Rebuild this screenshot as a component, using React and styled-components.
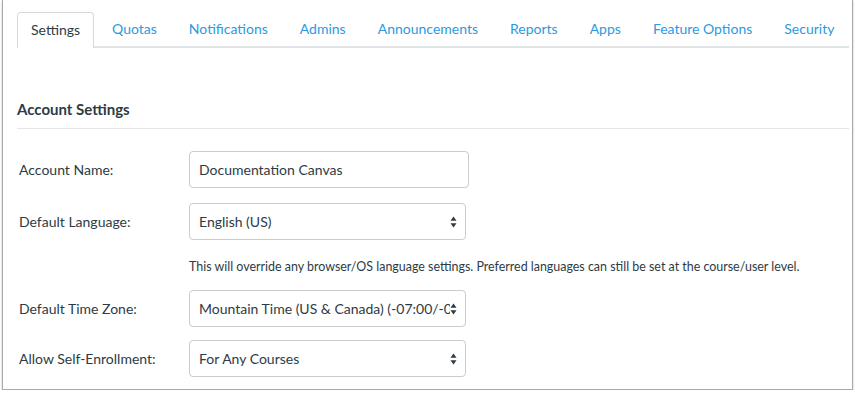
import styled, { createGlobalStyle } from "styled-components";

const GlobalStyle = createGlobalStyle`
  body {
    margin: 0;
    background: #ffffff;
    font-family: Lato, "Open Sans", "Liberation Sans", sans-serif;
  }
`;

const Window = styled.div`
  box-sizing: border-box;
  margin-left: 2px;
  width: 851px;
  height: 390px;
  background: #ffffff;
  border: 1px solid #a9a9a9;
  border-top: none;
  box-shadow: 0 1px 2px rgba(0, 0, 0, 0.25);
  padding: 12px 3px 0 14px;
  overflow: hidden;
`;

const TabList = styled.nav`
  display: flex;
  align-items: flex-end;
  gap: 4px;
  height: 34px;
  border-bottom: 2px solid #e1e4e6;
`;

const Tab = styled.a`
  box-sizing: border-box;
  display: flex;
  align-items: center;
  height: ${({ $active }) => ($active ? "36px" : "34px")};
  margin-bottom: ${({ $active }) => ($active ? "-2px" : "0")};
  padding: 0 13px 2px;
  font-size: 14px;
  color: ${({ $active }) => ($active ? "#2d3b45" : "#2b9ae0")};
  background: #ffffff;
  border: 1px solid ${({ $active }) => ($active ? "#d5d9dc" : "transparent")};
  border-bottom: none;
  border-radius: 4px 4px 0 0;
  text-decoration: none;
  white-space: nowrap;
`;

const Heading = styled.h2`
  margin: 51px 0 0;
  padding-bottom: 9px;
  font-size: 15px;
  font-weight: 700;
  color: #2d3b45;
  line-height: 20px;
  border-bottom: 1px solid #e3e6e8;
`;

const Form = styled.div`
  display: flex;
  flex-direction: column;
  padding-top: 22px;
`;

const Row = styled.div`
  display: grid;
  grid-template-columns: 172px auto;
  align-items: center;
  margin-bottom: ${({ $gap }) => $gap}px;
`;

const Label = styled.label`
  padding-left: 2px;
  font-size: 14px;
  color: #2d3b45;
`;

const Field = styled.div`
  box-sizing: border-box;
  display: flex;
  align-items: center;
  width: ${({ $w }) => $w}px;
  height: 37px;
  padding: 0 8px 0 9px;
  border: 1px solid #c7cdd1;
  border-radius: 4px;
  font-size: 14px;
  color: #2d3b45;
  background: #ffffff;
`;

const Value = styled.span`
  flex: 1;
  overflow: hidden;
  white-space: nowrap;
`;

const Help = styled.p`
  margin: 0 0 15px 172px;
  font-size: 12.45px;
  line-height: 16px;
  color: #2d3b45;
  white-space: nowrap;
`;

const Arrows = () => (
  <svg width="7" height="12" viewBox="0 0 7 12">
    <path d="M3.5 0.5 L6.5 4.8 H0.5 Z" fill="#2d3b45" />
    <path d="M3.5 11.5 L6.5 7.2 H0.5 Z" fill="#2d3b45" />
  </svg>
);

const tabs = [
  "Settings",
  "Quotas",
  "Notifications",
  "Admins",
  "Announcements",
  "Reports",
  "Apps",
  "Feature Options",
  "Security",
];

export default function App() {
  return (
    <>
      <GlobalStyle />
      <Window>
        <TabList>
          {tabs.map((t, i) => (
            <Tab key={t} $active={i === 0}>
              {t}
            </Tab>
          ))}
        </TabList>
        <Heading>Account Settings</Heading>
        <Form>
          <Row $gap={15}>
            <Label>Account Name:</Label>
            <Field $w={280}>
              <Value>Documentation Canvas</Value>
            </Field>
          </Row>
          <Row $gap={19}>
            <Label>Default Language:</Label>
            <Field $w={277}>
              <Value>English (US)</Value>
              <Arrows />
            </Field>
          </Row>
          <Help>
            This will override any browser/OS language settings. Preferred
            languages can still be set at the course/user level.
          </Help>
          <Row $gap={13}>
            <Label>Default Time Zone:</Label>
            <Field $w={277}>
              <Value>Mountain Time (US &amp; Canada) (-07:00/-06:00)</Value>
              <Arrows />
            </Field>
          </Row>
          <Row $gap={0}>
            <Label>Allow Self-Enrollment:</Label>
            <Field $w={277}>
              <Value>For Any Courses</Value>
              <Arrows />
            </Field>
          </Row>
        </Form>
      </Window>
    </>
  );
}
